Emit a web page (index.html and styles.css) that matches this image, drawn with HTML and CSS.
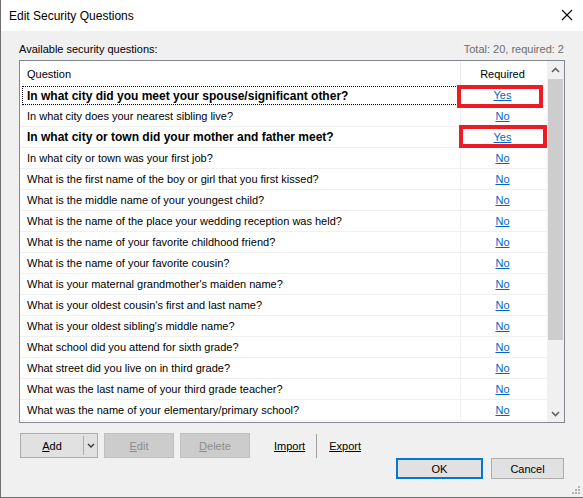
FILE: index.html
```html
<!DOCTYPE html>
<html>
<head>
<meta charset="utf-8">
<link rel="stylesheet" href="styles.css">
</head>
<body>
<div class="window">
  <div class="titlebar">
    <span class="title">Edit Security Questions</span>
    <svg class="close" width="12" height="12" viewBox="0 0 12 12"><path d="M1 1 L11 11 M11 1 L1 11" stroke="#000" stroke-width="1.1" fill="none"/></svg>
  </div>
  <div class="content">
    <div class="labels">
      <span>Available security questions:</span>
      <span class="total">Total: 20, required: 2</span>
    </div>
    <div class="list">
      <div class="cols">
        <div class="head">
          <div class="q">Question</div>
          <div class="r">Required</div>
        </div>
        <div class="rows">
          <div class="row bold focus"><div class="q"><span class="focusbox">In what city did you meet your spouse/significant other?</span></div><div class="r"><a>Yes</a></div></div>
          <div class="row"><div class="q">In what city does your nearest sibling live?</div><div class="r"><a>No</a></div></div>
          <div class="row bold"><div class="q">In what city or town did your mother and father meet?</div><div class="r"><a>Yes</a></div></div>
          <div class="row"><div class="q">In what city or town was your first job?</div><div class="r"><a>No</a></div></div>
          <div class="row"><div class="q">What is the first name of the boy or girl that you first kissed?</div><div class="r"><a>No</a></div></div>
          <div class="row"><div class="q">What is the middle name of your youngest child?</div><div class="r"><a>No</a></div></div>
          <div class="row"><div class="q">What is the name of the place your wedding reception was held?</div><div class="r"><a>No</a></div></div>
          <div class="row"><div class="q">What is the name of your favorite childhood friend?</div><div class="r"><a>No</a></div></div>
          <div class="row"><div class="q">What is the name of your favorite cousin?</div><div class="r"><a>No</a></div></div>
          <div class="row"><div class="q">What is your maternal grandmother's maiden name?</div><div class="r"><a>No</a></div></div>
          <div class="row"><div class="q">What is your oldest cousin's first and last name?</div><div class="r"><a>No</a></div></div>
          <div class="row"><div class="q">What is your oldest sibling's middle name?</div><div class="r"><a>No</a></div></div>
          <div class="row"><div class="q">What school did you attend for sixth grade?</div><div class="r"><a>No</a></div></div>
          <div class="row"><div class="q">What street did you live on in third grade?</div><div class="r"><a>No</a></div></div>
          <div class="row"><div class="q">What was the last name of your third grade teacher?</div><div class="r"><a>No</a></div></div>
          <div class="row"><div class="q">What was the name of your elementary/primary school?</div><div class="r"><a>No</a></div></div>
        </div>
      </div>
      <div class="scrollbar">
        <div class="sbtn"><svg width="9" height="6" viewBox="0 0 9 6"><path d="M1 5 L4.5 1.5 L8 5" stroke="#606060" stroke-width="1.6" fill="none"/></svg></div>
        <div class="track"><div class="thumb"></div></div>
        <div class="sbtn"><svg width="9" height="6" viewBox="0 0 9 6"><path d="M1 1 L4.5 4.5 L8 1" stroke="#606060" stroke-width="1.6" fill="none"/></svg></div>
      </div>
      <div class="mark mark1"></div>
      <div class="mark mark2"></div>
    </div>
    <div class="actions">
      <div class="btn split"><span class="main"><u>A</u>dd</span><span class="drop"><svg width="8" height="5" viewBox="0 0 8 5"><path d="M1 1 L4 4 L7 1" stroke="#333" stroke-width="1.3" fill="none"/></svg></span></div>
      <div class="btn disabled"><u>E</u>dit</div>
      <div class="btn disabled"><u>D</u>elete</div>
      <a class="link first">Import</a>
      <span class="vsep"></span>
      <a class="link">Export</a>
    </div>
    <div class="footer">
      <div class="btn ok">OK</div>
      <div class="btn cancel">Cancel</div>
    </div>
  </div>
  <svg class="grip" width="9" height="9" viewBox="0 0 9 9" fill="#b4b4b4"><rect x="7" y="1" width="2" height="2"/><rect x="4" y="4" width="2" height="2"/><rect x="7" y="4" width="2" height="2"/><rect x="1" y="7" width="2" height="2"/><rect x="4" y="7" width="2" height="2"/><rect x="7" y="7" width="2" height="2"/></svg>
</div>
</body>
</html>
```
FILE: styles.css
```css
html, body {
  margin: 0;
  padding: 0;
}
body {
  width: 583px;
  height: 498px;
  overflow: hidden;
  font-family: "Liberation Sans", Arial, sans-serif;
  font-size: 11px;
  color: #000;
}
.window {
  position: relative;
  width: 583px;
  height: 498px;
  box-sizing: border-box;
  background: #f0f0f0;
  border-left: 1px solid #6f6f6f;
  border-bottom: 1px solid #6f6f6f;
  display: flex;
  flex-direction: column;
}
.titlebar {
  height: 31px;
  flex: none;
  background: #fff;
  display: flex;
  align-items: center;
  justify-content: space-between;
  padding: 0 10px 0 8px;
  box-sizing: border-box;
}
.title {
  font-size: 12px;
}
.close {
  margin-top: -1px;
}
.content {
  padding: 0 18px 0 18px;
  display: flex;
  flex-direction: column;
}
.labels {
  height: 29px;
  display: flex;
  align-items: flex-end;
  justify-content: space-between;
  padding: 0 1px 3px 0;
  box-sizing: border-box;
  line-height: 15px;
}
.total {
  color: #6d6d6d;
}
.list {
  position: relative;
  height: 363px;
  width: 546px;
  box-sizing: border-box;
  border: 1px solid #828790;
  background: #fff;
  display: flex;
}
.cols {
  width: 527px;
  display: flex;
  flex-direction: column;
}
.head {
  height: 24px;
  display: flex;
  line-height: 26px;
}
.q {
  width: 441px;
  box-sizing: border-box;
  padding-left: 7px;
  border-right: 1px solid #e8e8e8;
  white-space: nowrap;
  overflow: hidden;
}
.r {
  flex: 1;
  text-align: center;
  padding-right: 3px;
}
.rows {
  flex: 1;
  overflow: hidden;
}
.row {
  display: flex;
  height: 21px;
  box-sizing: border-box;
  border-bottom: 1px solid #f0f0f0;
  line-height: 21px;
}
.row .q {
  border-right-color: #f0f0f0;
}
.bold .q {
  font-weight: bold;
  font-size: 12px;
}
.focus .q {
  padding-left: 0;
}
.focusbox {
  display: block;
  margin: 1px 2px 0 2px;
  height: 19px;
  line-height: 18px;
  padding-left: 4px;
  box-sizing: border-box;
  border: 1px dotted #000;
}
.r a {
  color: #0066cc;
  text-decoration: underline;
}
.scrollbar {
  width: 17px;
  background: #f0f0f0;
  display: flex;
  flex-direction: column;
}
.sbtn {
  height: 17px;
  display: flex;
  align-items: center;
  justify-content: center;
}
.track {
  flex: 1;
  padding: 1px 1px 0 1px;
}
.thumb {
  height: 261px;
  background: #cdcdcd;
}
.mark {
  position: absolute;
  border: 4px solid #ed1c24;
  box-sizing: border-box;
}
.mark1 {
  left: 437px;
  top: 24px;
  width: 86px;
  height: 23px;
}
.mark2 {
  left: 439px;
  top: 64px;
  width: 88px;
  height: 23px;
}
.actions {
  display: flex;
  align-items: center;
  height: 25px;
  margin-top: 10px;
  padding-left: 1px;
}
.btn {
  box-sizing: border-box;
  height: 25px;
  border: 1px solid #adadad;
  background: #e1e1e1;
  display: flex;
  align-items: center;
  justify-content: center;
}
.split {
  width: 78px;
  justify-content: flex-start;
}
.split .main {
  width: 62px;
  text-align: center;
}
.split .drop {
  height: 19px;
  border-left: 1px solid #adadad;
  flex: 1;
  display: flex;
  align-items: center;
  justify-content: center;
}
.disabled {
  width: 70px;
  margin-left: 6px;
  background: #cccccc;
  border-color: #bfbfbf;
  color: #8c8c8c;
}
.link {
  color: #000;
  text-decoration: underline;
}
.link.first {
  margin-left: 24px;
}
.vsep {
  width: 1px;
  height: 24px;
  background: #a0a0a0;
  margin: 0 12px 0 11px;
}
.footer {
  display: flex;
  justify-content: flex-end;
  gap: 8px;
  padding-right: 1px;
  margin-top: 0;
}
.footer .btn {
  height: 21px;
}
.ok {
  width: 87px;
  border: 2px solid #0078d7;
}
.cancel {
  width: 73px;
}
.grip {
  position: absolute;
  right: 3px;
  bottom: 3px;
}
```
